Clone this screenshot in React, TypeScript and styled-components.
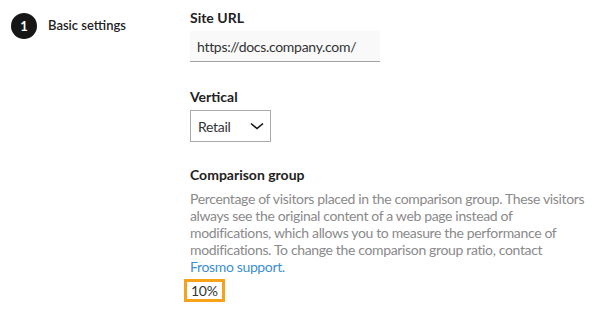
import React from 'react';
import styled, { createGlobalStyle } from 'styled-components';

const GlobalStyle = createGlobalStyle`
  body {
    margin: 0;
    background: #ffffff;
    font-family: Lato, "Open Sans", sans-serif;
    color: #222;
  }
`;

const Page = styled.div`
  display: flex;
  align-items: flex-start;
  padding: 9px 0 0 11px;
`;

const Step = styled.div`
  display: flex;
  align-items: center;
  gap: 11px;
  width: 179px;
  height: 26px;
  margin-top: 4px;
  flex-shrink: 0;
`;

const StepNumber = styled.div`
  width: 26px;
  height: 26px;
  border-radius: 50%;
  background: #161616;
  color: #fff;
  font-size: 13px;
  font-weight: 700;
  display: flex;
  align-items: center;
  justify-content: center;
`;

const StepTitle = styled.div`
  font-size: 13px;
  font-weight: 600;
  color: #222;
  margin-top: -3px;
`;

const Form = styled.div`
  display: flex;
  flex-direction: column;
  width: 401px;
`;

const Field = styled.div<{ $gap?: number }>`
  display: flex;
  flex-direction: column;
  align-items: flex-start;
  margin-bottom: ${({ $gap }) => $gap ?? 26}px;
`;

const Label = styled.div<{ $space?: number }>`
  font-size: 14px;
  font-weight: 700;
  color: #222;
  line-height: 18px;
  margin-bottom: ${({ $space }) => $space ?? 4}px;
`;

const TextInput = styled.div`
  width: 190px;
  height: 31px;
  box-sizing: border-box;
  padding: 0 7px;
  background: #f9f9f9;
  border-bottom: 1px solid #a3a3a3;
  display: flex;
  align-items: center;
  font-size: 14px;
  letter-spacing: -0.3px;
  color: #333;
`;

const Select = styled.div`
  width: 81px;
  height: 32px;
  box-sizing: border-box;
  border: 1px solid #a9a9a9;
  padding: 0 6px 0 7px;
  display: flex;
  align-items: center;
  justify-content: space-between;
  font-size: 14px;
  letter-spacing: -0.3px;
  color: #333;
`;

const Description = styled.p`
  margin: 0;
  font-size: 14px;
  line-height: 17px;
  letter-spacing: -0.35px;
  color: #8a8a8a;
`;

const Link = styled.a`
  color: #3d8fd1;
  text-decoration: none;
  white-space: nowrap;
`;

const Value = styled.div`
  margin-left: -6px;
  margin-top: 4px;
  padding: 1px 4px 0;
  border: 3px solid #f7a21b;
  font-size: 14px;
  letter-spacing: -0.3px;
  color: #333;
  line-height: 16px;
`;

const Chevron = () => (
  <svg width="14" height="8" viewBox="0 0 14 8">
    <path d="M1 1.5l6 5 6-5" fill="none" stroke="#111" strokeWidth="1.6" />
  </svg>
);

const App: React.FC = () => (
  <>
    <GlobalStyle />
    <Page>
      <Step>
        <StepNumber>1</StepNumber>
        <StepTitle>Basic settings</StepTitle>
      </Step>
      <Form>
        <Field>
          <Label>Site URL</Label>
          <TextInput>https://docs.company.com/</TextInput>
        </Field>
        <Field $gap={24}>
          <Label>Vertical</Label>
          <Select>
            Retail
            <Chevron />
          </Select>
        </Field>
        <Field $gap={0}>
          <Label $space={6}>Comparison group</Label>
          <Description>
            Percentage of visitors placed in the comparison group. These visitors always see the
            original content of a web page instead of modifications, which allows you to measure the
            performance of modifications. To change the comparison group ratio, contact{' '}
            <Link href="#">Frosmo support.</Link>
          </Description>
          <Value>10%</Value>
        </Field>
      </Form>
    </Page>
  </>
);

export default App;
